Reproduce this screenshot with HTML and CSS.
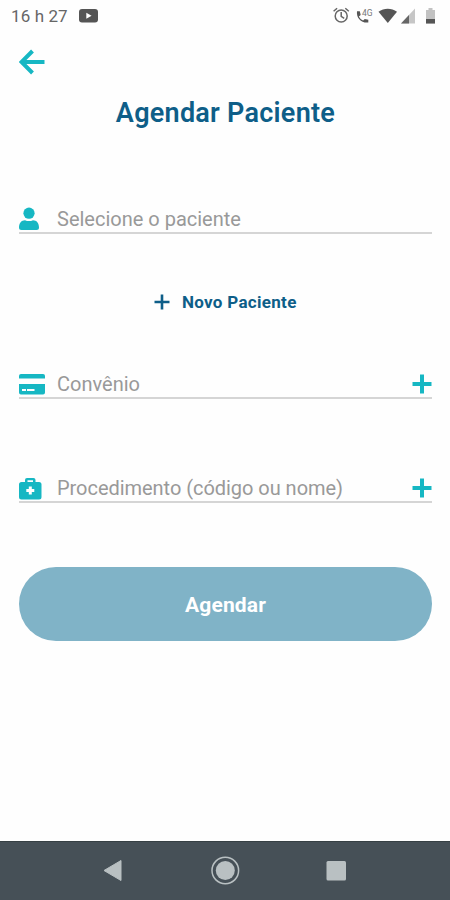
FILE: index.html
```html
<!DOCTYPE html>
<html lang="pt-BR">
<head>
<meta charset="utf-8">
<title>Agendar Paciente</title>
<link rel="stylesheet" href="styles.css">
</head>
<body>
<div class="screen">
  <header class="status">
    <span class="clock">16 h 27</span>
    <svg class="video" width="19" height="14" viewBox="0 0 19 14"><rect width="19" height="13.5" rx="3" fill="#555"/><path d="M7.3 3.8v6l5.3-3z" fill="#fff"/></svg>
    <svg class="indicators" width="106" height="20" viewBox="0 0 106 20">
      <g fill="none" stroke="#666" stroke-width="1.5"><circle cx="9.2" cy="11" r="6"/><path d="M9.2 7v4.3l3 2M1.6 6.3l3.5-3M16.8 6.3l-3.5-3"/></g>
      <path d="M25 6.2h2.800l.9 3.700-1.800 1.600c1 2 2.300 3.200 4.200 4.100l1.700-1.700 3.500.9v2.700c-6.800.8-12.200-4.500-11.300-11.300z" fill="#555"/>
      <text x="30" y="11" class="network">4G</text>
      <path d="M46.500 6.800c5.500-4.200 13-4.200 18.500 0L55.800 18z" fill="#555"/>
      <path d="M83 3.500v15H69z" fill="#c6c6c6"/><path d="M77 10v8.500h-8z" fill="#666"/>
      <path d="M94 5h2.500V3h4v2h2.500v13.500h-9z" fill="#c2c2c2"/><path d="M94 14h9v4.500h-9z" fill="#555"/>
    </svg>
  </header>
  <main class="content">
    <svg class="back" width="26" height="26" viewBox="0 0 26 26"><path d="M13.500 2 2.500 13l11 11M3.500 13H25.500" fill="none" stroke="#16b7c3" stroke-width="4"/></svg>
    <h1 class="title"><span>Agendar Paciente</span></h1>
    <div class="field patient">
      <svg class="icon" width="26" height="24" viewBox="0 0 26 24"><circle cx="10" cy="6.200" r="5.600"/><path d="M0 20.500c0-4.500 2.500-7.300 6-7.300 2.500 1.200 5.500 1.200 8 0 3.600 0 6 2.800 6 7.300 0 1.700-.8 2.500-2.500 2.500h-15C.8 23 0 22.200 0 20.500z"/></svg>
      <span class="label">Selecione o paciente</span>
    </div>
    <div class="new-patient">
      <svg width="16" height="16" viewBox="0 0 16 16"><path d="M8 .5v15M.5 8h15" stroke="#0e5e88" stroke-width="2.600"/></svg>
      <span class="new-label">Novo Paciente</span>
    </div>
    <div class="field plan">
      <svg class="icon" width="26" height="24" viewBox="0 0 26 24"><path d="M2 2h22q2 0 2 2v2.500H0V4q0-2 2-2z"/><path fill-rule="evenodd" d="M0 12h26v8.500q0 2-2 2H2q-2 0-2-2zm3 5v2.100h4V17zm5 0v2.100h7.500V17z"/></svg>
      <span class="label">Convênio</span>
      <svg class="add" width="20" height="20" viewBox="0 0 20 20"><path d="M10 .5v19M.5 10h19"/></svg>
    </div>
    <div class="field procedure">
      <svg class="icon" width="26" height="24" viewBox="0 0 26 24"><path fill-rule="evenodd" d="M6 5V3q0-2 2-2h6.500q2 0 2 2v2H20q2.500 0 2.500 2.500V20q0 2.500-2.500 2.500H2.500Q0 22.500 0 20V7.500Q0 5 2.500 5zm2.500 0H14V3.200H8.500zm1.300 4.500V12H7.300v3h2.500v2.500h3V15h2.500v-3h-2.500V9.500z"/></svg>
      <span class="label long">Procedimento (código ou nome)</span>
      <svg class="add" width="20" height="20" viewBox="0 0 20 20"><path d="M10 .5v19M.5 10h19"/></svg>
    </div>
    <button class="submit">Agendar</button>
  </main>
  <nav class="navbar">
    <svg width="450" height="58" viewBox="0 1 450 58" fill="#b9c0c2"><path d="M104 29.500 121 19.500v20z" stroke="#b9c0c2" stroke-linejoin="round"/><circle cx="225.300" cy="29.500" r="9.500"/><circle cx="225.300" cy="29.500" r="13.300" fill="none" stroke="#b9c0c2" stroke-width="1.500"/><rect x="326.500" y="20" width="19.500" height="19.500" rx="1.500"/></svg>
  </nav>
</div>
</body>
</html>
```
FILE: styles.css
```css
* { box-sizing: border-box; }
body { margin: 0; background: #fff; font-family: Roboto, sans-serif; }
svg { display: block; flex: none; }
.screen { width: 450px; height: 900px; display: flex; flex-direction: column; overflow: hidden; background: #fefefe; }
.status { height: 32px; display: flex; align-items: center; padding: 0 12px 0 11px; color: #666; }
.clock { width: 68px; font-size: 17px; letter-spacing: 0.1px; white-space: nowrap; }
.indicators { margin: -3px 0 0 auto; }
.network { font-size: 8.500px; fill: #777; }
.content { flex: 1; padding: 17px 18px 0 19px; display: flex; flex-direction: column; }
.title { margin: 19px 0 0; height: 38px; line-height: 38px; text-align: center; font-size: 27px; font-weight: 600; letter-spacing: 0.26px; color: #0e5e88; white-space: nowrap; }
.field { height: 32px; display: flex; align-items: flex-start; border-bottom: 2px solid #d5d5d5; }
.patient { margin-top: 70px; }
.icon { fill: #16b7c3; margin-top: 5px; }
.procedure .icon { margin-top: 6px; }
.label { margin-left: 12px; font-size: 20px; line-height: 24px; padding-top: 5px; color: #999; white-space: nowrap; }
.long { letter-spacing: -0.04px; }
.add { margin: 7px 0 0 auto; stroke: #16b7c3; stroke-width: 4; }
.new-patient { height: 24px; margin: 56px 0 0 135px; display: flex; align-items: center; gap: 12px; color: #0e5e88; }
.new-label { font-size: 17px; font-weight: 700; letter-spacing: 0.3px; white-space: nowrap; }
.plan { margin-top: 53px; }
.procedure { margin-top: 72px; }
.submit { margin: 64px 0 0; width: 413px; height: 74px; border: 0; border-radius: 37px; padding: 2px 0 0; background: #80b3c7; color: #fff; font: 700 21px Roboto, sans-serif; letter-spacing: 0.15px; }
.navbar { height: 59px; background: #465057; border-top: 1px solid #364044; }
```
